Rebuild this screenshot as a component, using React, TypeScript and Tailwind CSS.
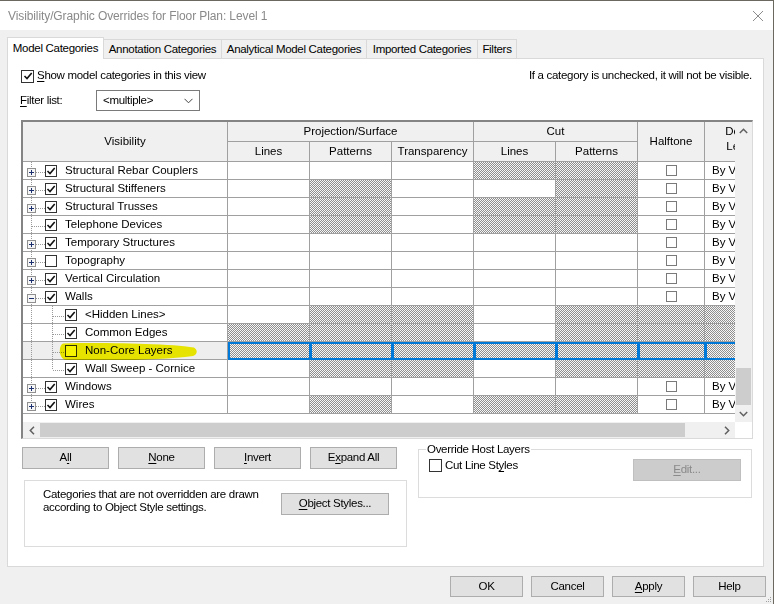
import React from "react";

type Row = {
  name: string;
  lvl: 0 | 1;
  exp?: "+" | "-";
  on: boolean;
  // projLines, projPatterns, transparency, cutLines, cutPatterns, halftone, detail
  h: number[];
  last?: boolean;
  sel?: boolean;
};

const rows: Row[] = [
  { name: "Structural Rebar Couplers", lvl: 0, exp: "+", on: true, h: [0, 0, 0, 1, 1, 0, 0] },
  { name: "Structural Stiffeners", lvl: 0, exp: "+", on: true, h: [0, 1, 0, 0, 1, 0, 0] },
  { name: "Structural Trusses", lvl: 0, exp: "+", on: true, h: [0, 1, 0, 1, 1, 0, 0] },
  { name: "Telephone Devices", lvl: 0, on: true, h: [0, 1, 0, 1, 1, 0, 0] },
  { name: "Temporary Structures", lvl: 0, exp: "+", on: true, h: [0, 0, 0, 0, 0, 0, 0] },
  { name: "Topography", lvl: 0, exp: "+", on: false, h: [0, 0, 0, 0, 0, 0, 0] },
  { name: "Vertical Circulation", lvl: 0, exp: "+", on: true, h: [0, 0, 0, 0, 0, 0, 0] },
  { name: "Walls", lvl: 0, exp: "-", on: true, h: [0, 0, 0, 0, 0, 0, 0] },
  { name: "<Hidden Lines>", lvl: 1, on: true, h: [0, 1, 1, 0, 1, 1, 1] },
  { name: "Common Edges", lvl: 1, on: true, h: [1, 1, 1, 0, 1, 1, 1] },
  { name: "Non-Core Layers", lvl: 1, on: false, h: [1, 1, 1, 1, 1, 1, 1], sel: true },
  { name: "Wall Sweep - Cornice", lvl: 1, on: true, h: [0, 1, 1, 0, 1, 1, 1], last: true },
  { name: "Windows", lvl: 0, exp: "+", on: true, h: [0, 0, 0, 0, 0, 0, 0] },
  { name: "Wires", lvl: 0, exp: "+", on: true, h: [0, 1, 0, 1, 1, 0, 0], last: true },
];

const hatch =
  "[background-image:repeating-conic-gradient(#8e8e8e_0%_25%,#f7f7f7_0%_50%)] [background-size:2px_2px]";

function Check({ on, size = "w-[12px] h-[12px]", color = "border-[#333333]" }: { on: boolean; size?: string; color?: string }) {
  return (
    <span className={`${size} ${color} border bg-white flex items-center justify-center shrink-0`}>
      {on && (
        <svg width="10" height="10" viewBox="0 0 10 10">
          <path d="M1.5 5 L4 7.5 L8.7 2" fill="none" stroke="#111" strokeWidth="1.6" />
        </svg>
      )}
    </span>
  );
}

function Tree({ r }: { r: Row }) {
  const dot = { stroke: "#9a9a9a", strokeDasharray: "1 1", strokeWidth: 1 };
  if (r.lvl === 1) {
    return (
      <svg width="42" height="18" className="shrink-0">
        <line x1="8.5" y1="0" x2="8.5" y2="18" {...dot} />
        <line x1="29.5" y1="0" x2="29.5" y2={r.last ? 10 : 18} {...dot} />
        <line x1="30" y1="10.5" x2="42" y2="10.5" {...dot} />
      </svg>
    );
  }
  return (
    <svg width="22" height="18" className="shrink-0">
      <line x1="8.5" y1="0" x2="8.5" y2={r.last ? 10 : 18} {...dot} />
      <line x1="9" y1="10.5" x2="22" y2="10.5" {...dot} />
      {r.exp && (
        <g>
          <rect x="4.5" y="6.5" width="8" height="8" fill="#f6f6f6" stroke="#8f8f8f" />
          <line x1="6" y1="10.5" x2="11" y2="10.5" stroke="#1c2f6e" />
          {r.exp === "+" && <line x1="8.5" y1="8" x2="8.5" y2="13" stroke="#1c2f6e" />}
        </g>
      )}
    </svg>
  );
}

function Highlight() {
  return (
    <svg
      className="absolute left-0 top-0 mix-blend-multiply pointer-events-none overflow-visible"
      width="200"
      height="22"
      viewBox="0 0 200 22"
    >
      <path
        d="M40 1.5 C60 0.6 100 1 130 2.2 C150 3 166 4.2 171 5.6 C175 8 174.5 12.5 170 14 C150 16.5 120 18 90 18.6 C70 19 52 18.8 42 17.8 C36 16 35 4 40 1.5 Z"
        fill="#f7f400"
      />
    </svg>
  );
}

function Cell({ r, i }: { r: Row; i: number }) {
  const hatched = r.h[i] === 1;
  const border = r.sel
    ? "border-t-2 border-b-2 border-l-2 border-r border-[#0078d7]"
    : "border-r border-b border-[#a0a0a0]";
  return (
    <div className={`${border} ${hatched ? hatch : "bg-white"} flex items-center overflow-hidden`}>
      {!hatched && i === 5 && (
        <div className="w-full flex justify-center">
          <Check on={false} size="w-[11px] h-[11px]" color="border-[#7a7a7a]" />
        </div>
      )}
      {!hatched && i === 6 && <span className="pl-[7px] whitespace-nowrap">By View</span>}
    </div>
  );
}

function DataRow({ r }: { r: Row }) {
  return (
    <>
      <div
        className={`relative border-r border-b border-[#a0a0a0] flex items-center ${r.sel ? "bg-[#eeeeee]" : "bg-white"}`}
      >
        <Tree r={r} />
        <Check on={r.on} />
        <span className="ml-[8px] whitespace-nowrap">{r.name}</span>
        {r.sel && <Highlight />}
      </div>
      {[0, 1, 2, 3, 4, 5, 6].map((i) => (
        <Cell key={i} r={r} i={i} />
      ))}
    </>
  );
}

function Hd({ className = "", children }: { className?: string; children: React.ReactNode }) {
  return (
    <div className={`border-r border-b border-[#a0a0a0] flex items-center justify-center text-center ${className}`}>
      {children}
    </div>
  );
}

function Btn({ w, children, className = "" }: { w: string; children: React.ReactNode; className?: string }) {
  return (
    <button
      className={`${w} h-[21px] bg-[#e1e1e1] border border-[#adadad] flex items-center justify-center leading-none ${className}`}
    >
      {children}
    </button>
  );
}

const u = (s: string) => <span className="underline underline-offset-[2px]">{s}</span>;

export default function App() {
  const tabs = [
    { label: "Annotation Categories", w: "w-[118px]" },
    { label: "Analytical Model Categories", w: "w-[145px]" },
    { label: "Imported Categories", w: "w-[111px]" },
    { label: "Filters", w: "w-[39px]" },
  ];

  return (
    <div className="relative w-[774px] h-[604px] bg-[#f0f0f0] border-t border-r border-[#6b6860] font-['Liberation_Sans',Arial,sans-serif] text-[11.5px] tracking-[-0.3px] text-[#000] overflow-hidden">
      {/* title bar */}
      <div className="h-[29px] bg-white flex items-center justify-between pl-[8px] pr-[9px]">
        <span className="text-[#8a8a8a] text-[12px] tracking-[-0.1px]">Visibility/Graphic Overrides for Floor Plan: Level 1</span>
        <svg width="12" height="12" viewBox="0 0 12 12">
          <path d="M1 1 L11 11 M11 1 L1 11" stroke="#8c8c8c" strokeWidth="1" />
        </svg>
      </div>

      <div className="pl-[7px] pr-[9px] pt-[7px]">
        {/* tabs */}
        <div className="relative z-10 flex items-end h-[22px] -mb-px">
          <div className="w-[97px] h-[22px] bg-white border-l border-t border-r border-[#d9d9d9] flex items-center justify-center">
            Model Categories
          </div>
          {tabs.map((t) => (
            <div
              key={t.label}
              className={`${t.w} h-[19px] mb-px bg-[#f0f0f0] border-t border-r border-[#d9d9d9] flex items-center justify-center pt-px whitespace-nowrap`}
            >
              {t.label}
            </div>
          ))}
        </div>

        {/* panel */}
        <div className="h-[509px] bg-white border border-[#d9d9d9] pl-[13px] pr-[11px]">
          <div className="mt-[10px] h-[14px] flex items-center justify-between">
            <label className="flex items-center">
              <Check on size="w-[13px] h-[13px]" />
              <span className="ml-[3px]">
                {u("S")}how model categories in this view
              </span>
            </label>
            <span>If a category is unchecked, it will not be visible.</span>
          </div>

          <div className="mt-[7px] h-[21px] flex items-center">
            <span className="-ml-px w-[76px]">{u("F")}ilter list:</span>
            <div className="w-[104px] h-[21px] border border-[#7a7a7a] flex items-center justify-between pl-[6px] pr-[6px]">
              <span>&lt;multiple&gt;</span>
              <svg width="9" height="6" viewBox="0 0 9 6">
                <path d="M0.5 0.8 L4.5 4.8 L8.5 0.8" fill="none" stroke="#444" strokeWidth="1" />
              </svg>
            </div>
          </div>

          {/* table */}
          <div className="mt-[9px] w-[732px] h-[319px] border-l-2 border-t-2 border-[#848484] border-r border-b border-r-[#dadada] border-b-[#dadada] flex flex-col tracking-normal">
            <div className="flex h-[300px]">
              <div className="w-[712px] overflow-hidden">
                <div className="w-[722px] grid grid-cols-[205px_82px_82px_82px_82px_82px_67px_40px] grid-rows-[20px_20px] bg-[#f0f0f0]">
                  <Hd className="row-span-2">Visibility</Hd>
                  <Hd className="col-span-3">Projection/Surface</Hd>
                  <Hd className="col-span-2">Cut</Hd>
                  <Hd className="row-span-2">Halftone</Hd>
                  <Hd className="row-span-2 !items-start !justify-start pt-[2px]">
                    <div className="w-[70px] shrink-0 leading-[15px] text-center">
                      Detail
                      <br />
                      Level
                    </div>
                  </Hd>
                  <Hd>Lines</Hd>
                  <Hd>Patterns</Hd>
                  <Hd>Transparency</Hd>
                  <Hd>Lines</Hd>
                  <Hd>Patterns</Hd>
                </div>
                <div className="w-[722px] grid grid-cols-[205px_82px_82px_82px_82px_82px_67px_40px] auto-rows-[18px]">
                  {rows.map((r) => (
                    <DataRow key={r.name} r={r} />
                  ))}
                </div>
              </div>
              {/* vertical scrollbar */}
              <div className="w-[17px] bg-[#f0f0f0] flex flex-col">
                <div className="h-[17px] flex items-center justify-center">
                  <svg width="9" height="6" viewBox="0 0 9 6">
                    <path d="M0.8 5 L4.5 1.3 L8.2 5" fill="none" stroke="#606060" strokeWidth="1.5" />
                  </svg>
                </div>
                <div className="flex-1" />
                <div className="h-[37px] mx-px bg-[#cdcdcd]" />
                <div className="h-[17px] flex items-center justify-center">
                  <svg width="9" height="6" viewBox="0 0 9 6">
                    <path d="M0.8 1 L4.5 4.7 L8.2 1" fill="none" stroke="#606060" strokeWidth="1.5" />
                  </svg>
                </div>
              </div>
            </div>
            {/* horizontal scrollbar */}
            <div className="h-[16px] flex">
              <div className="w-[712px] bg-[#f0f0f0] flex">
                <div className="w-[17px] flex items-center justify-center">
                  <svg width="6" height="9" viewBox="0 0 6 9">
                    <path d="M5 0.8 L1.3 4.5 L5 8.2" fill="none" stroke="#606060" strokeWidth="1.5" />
                  </svg>
                </div>
                <div className="w-[645px] my-px bg-[#cdcdcd]" />
                <div className="flex-1" />
                <div className="w-[17px] flex items-center justify-center">
                  <svg width="6" height="9" viewBox="0 0 6 9">
                    <path d="M1 0.8 L4.7 4.5 L1 8.2" fill="none" stroke="#606060" strokeWidth="1.5" />
                  </svg>
                </div>
              </div>
              <div className="w-[17px] bg-white" />
            </div>
          </div>

          {/* lower section */}
          <div className="mt-[8px] flex">
            <div className="w-[387px]">
              <div className="flex gap-[9px] pl-[1px]">
                <Btn w="w-[87px]" className="!h-[22px]">A{u("l")}l</Btn>
                <Btn w="w-[87px]" className="!h-[22px]">{u("N")}one</Btn>
                <Btn w="w-[87px]" className="!h-[22px]">{u("I")}nvert</Btn>
                <Btn w="w-[87px]" className="!h-[22px]">E{u("x")}pand All</Btn>
              </div>
              <div className="mt-[11px] ml-[3px] w-[383px] h-[67px] border border-[#dcdcdc] flex pl-[18px] pt-[7px]">
                <p className="w-[238px] leading-[13px] whitespace-nowrap">
                  Categories that are not overridden are drawn
                  <br />
                  according to Object Style settings.
                </p>
                <Btn w="w-[108px]" className="mt-[5px] !h-[22px]">
                  {u("O")}bject Styles...
                </Btn>
              </div>
            </div>
            <div className="ml-[10px] mt-[2px] w-[334px] h-[49px] border border-[#dcdcdc]">
              <div className="-mt-[8px] ml-[7px] w-fit bg-white px-px leading-[14px]">Override Host Layers</div>
              <div className="mt-[3px] flex items-start">
                <div className="ml-[10px] flex items-start">
                  <Check on={false} size="w-[13px] h-[13px]" />
                  <span className="ml-[3px] leading-[13px]">
                    Cut Line St{u("y")}les
                  </span>
                </div>
                <button className="ml-auto mr-[10px] w-[108px] h-[22px] bg-[#cccccc] border border-[#bfbfbf] text-[#8a8a8a] flex items-center justify-center leading-none">
                  {u("E")}dit...
                </button>
              </div>
            </div>
          </div>
        </div>

        {/* dialog buttons */}
        <div className="mt-[9px] flex justify-end gap-[8px] -mr-[2px]">
          <Btn w="w-[73px]">OK</Btn>
          <Btn w="w-[73px]">Cancel</Btn>
          <Btn w="w-[73px]">{u("A")}pply</Btn>
          <Btn w="w-[73px]">Help</Btn>
        </div>
      </div>

      {/* resize grip */}
      <svg className="absolute right-[1px] bottom-[1px]" width="7" height="7" viewBox="0 0 7 7">
        <rect x="5" y="1" width="1" height="1" fill="#a0a0a0" />
        <rect x="3" y="3" width="1" height="1" fill="#a0a0a0" />
        <rect x="5" y="3" width="1" height="1" fill="#a0a0a0" />
        <rect x="1" y="5" width="1" height="1" fill="#a0a0a0" />
        <rect x="3" y="5" width="1" height="1" fill="#a0a0a0" />
        <rect x="5" y="5" width="1" height="1" fill="#a0a0a0" />
      </svg>
    </div>
  );
}
